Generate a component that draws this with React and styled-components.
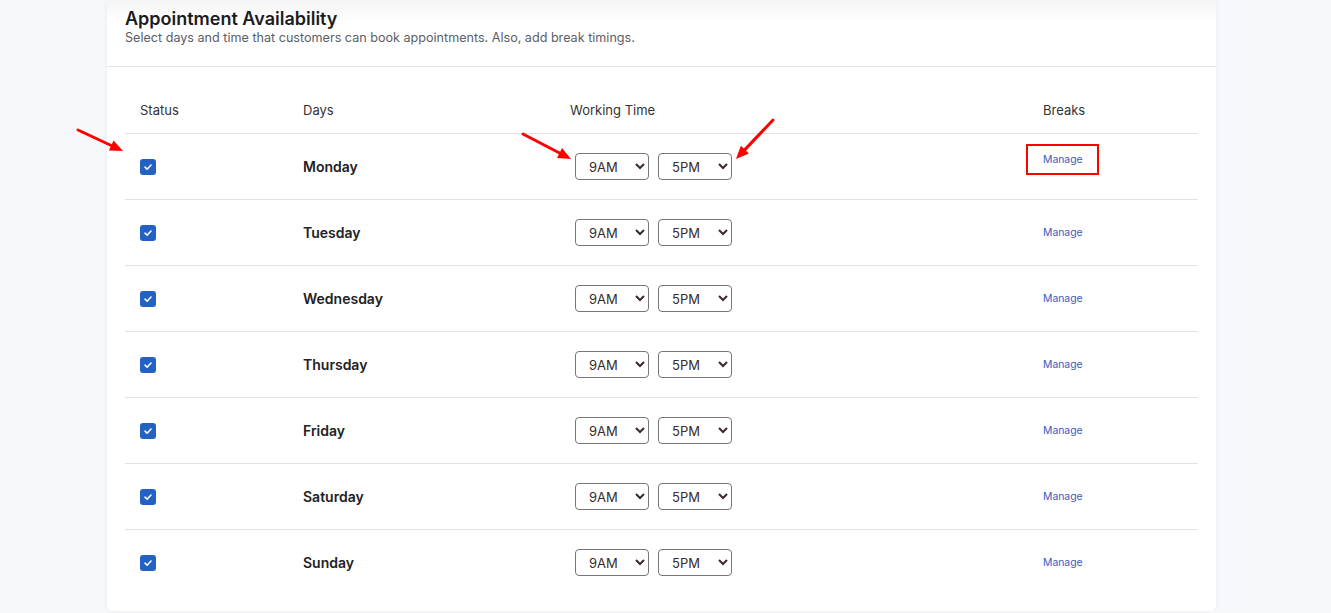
import React from "react";
import styled, { createGlobalStyle } from "styled-components";

const days = ["Monday", "Tuesday", "Wednesday", "Thursday", "Friday", "Saturday", "Sunday"];
const startTimes = ["7AM", "8AM", "9AM", "10AM", "11AM"];
const endTimes = ["3PM", "4PM", "5PM", "6PM", "7PM"];

const arrows = [
  { line: "78,130 111.2,145.5", head: "123,151 108.9,150.5 113.5,140.5" },
  { line: "523,134 559.5,153", head: "571,159 557,157.9 562,148.1" },
  { line: "773,120 744.9,149.6", head: "736,159 740.9,145.8 748.9,153.4" },
];

export default function App() {
  return (
    <>
      <GlobalStyle />
      <Page>
        <Card>
          <Header>
            <Title>Appointment Availability</Title>
            <Subtitle>
              Select days and time that customers can book appointments. Also, add break timings.
            </Subtitle>
          </Header>
          <Table>
            <HeadRow>
              <HeadCell>Status</HeadCell>
              <HeadCell>Days</HeadCell>
              <HeadCell>Working Time</HeadCell>
              <HeadCell>Breaks</HeadCell>
            </HeadRow>
            {days.map((day, i) => (
              <Row key={day} $last={i === days.length - 1}>
                <Cell>
                  <Check>
                    <svg width="10" height="10" viewBox="0 0 10 10">
                      <path d="M2 5.2 L4.1 7.2 L8 3" fill="none" stroke="#fff" strokeWidth="1.6" strokeLinecap="round" strokeLinejoin="round" />
                    </svg>
                  </Check>
                </Cell>
                <Cell>
                  <DayName>{day}</DayName>
                </Cell>
                <Cell>
                  <TimeGroup>
                    <TimeSelect defaultValue="9AM">
                      {startTimes.map(t => (
                        <option key={t}>{t}</option>
                      ))}
                    </TimeSelect>
                    <TimeSelect defaultValue="5PM">
                      {endTimes.map(t => (
                        <option key={t}>{t}</option>
                      ))}
                    </TimeSelect>
                  </TimeGroup>
                </Cell>
                <Cell>
                  <Manage href="#" $marked={i === 0}>
                    Manage
                  </Manage>
                </Cell>
              </Row>
            ))}
          </Table>
        </Card>
        <Annotations width="1331" height="613" viewBox="0 0 1331 613">
          {arrows.map((a, i) => (
            <g key={i}>
              <polyline points={a.line} stroke="#f00" strokeWidth="3" fill="none" strokeLinecap="round" />
              <polygon points={a.head} fill="#f00" />
            </g>
          ))}
        </Annotations>
      </Page>
    </>
  );
}

const GlobalStyle = createGlobalStyle`
  html, body {
    margin: 0;
    padding: 0;
    background: #f7f8fc;
    font-family: Inter, "Liberation Sans", sans-serif;
  }
`;

const Page = styled.div`
  position: relative;
  height: 613px;
  overflow: hidden;
  padding-left: 107px;
`;

const Card = styled.div`
  position: relative;
  width: 1109px;
  background: #fff;
  border-radius: 0 0 6px 6px;
  box-shadow: 0 0 6px rgba(30, 30, 60, 0.05);
  padding-bottom: 16px;
  &::before {
    content: "";
    position: absolute;
    left: 0;
    right: 0;
    top: 0;
    height: 22px;
    background: linear-gradient(rgba(0, 0, 0, 0.045), rgba(0, 0, 0, 0));
  }
`;

const Header = styled.div`
  padding: 8px 18px 19px;
  border-bottom: 1px solid #e4e2ea;
`;

const Title = styled.h2`
  margin: 0;
  font-size: 18px;
  line-height: 21px;
  font-weight: 600;
  color: #1b1b1f;
`;

const Subtitle = styled.p`
  margin: 0;
  font-size: 12.6px;
  line-height: 18px;
  color: #5b5e66;
`;

const Table = styled.div`
  padding: 23px 18px 0;
`;

const cols = "163px 267px 473px 170px";

const HeadRow = styled.div`
  display: grid;
  grid-template-columns: ${cols};
  height: 44px;
  padding-bottom: 4px;
  box-sizing: border-box;
  align-items: center;
  border-bottom: 1px solid #e2e2e2;
`;

const HeadCell = styled.div`
  padding-left: 15px;
  font-size: 13px;
  color: #333;
`;

const Row = styled.div`
  display: grid;
  grid-template-columns: ${cols};
  height: 65px;
  align-items: center;
  border-bottom: ${p => (p.$last ? "none" : "1px solid #e2e2e2")};
`;

const Cell = styled.div`
  padding-left: 15px;
  display: flex;
  align-items: center;
`;

const Check = styled.span`
  width: 16px;
  height: 16px;
  border-radius: 3px;
  background: #2362c2;
  display: inline-flex;
  align-items: center;
  justify-content: center;
`;

const DayName = styled.span`
  font-size: 14px;
  font-weight: 600;
  color: #222;
`;

const TimeGroup = styled.div`
  display: flex;
  gap: 9px;
  margin-left: 5px;
`;

const TimeSelect = styled.select`
  width: 74px;
  height: 27px;
  border: 1px solid #767676;
  border-radius: 4px;
  background: #fff;
  font-family: Inter, "Liberation Sans", sans-serif;
  font-size: 13px;
  color: #3a2a2a;
  padding-left: 9px;
`;

const Manage = styled.a`
  position: relative;
  font-size: 10.4px;
  color: #3d5ab8;
  text-decoration: none;
  margin-bottom: ${p => (p.$marked ? "14px" : "0")};
  &::after {
    content: "";
    display: ${p => (p.$marked ? "block" : "none")};
    position: absolute;
    left: -17px;
    right: -16px;
    top: -9px;
    bottom: -9px;
    border: 2.5px solid #f00;
  }
`;

const Annotations = styled.svg`
  position: absolute;
  left: 0;
  top: 0;
  pointer-events: none;
`;
